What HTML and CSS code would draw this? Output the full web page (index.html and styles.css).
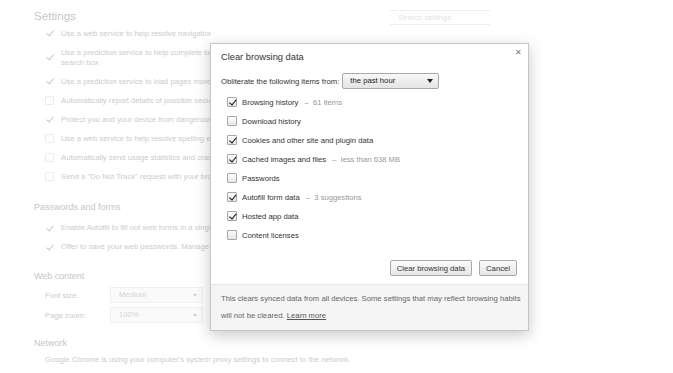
FILE: index.html
```html
<!DOCTYPE html>
<html lang="en">
<head>
    <meta charset="UTF-8">
    <meta name="viewport" content="width=device-width, initial-scale=1.0">
    <title>Settings - Clear browsing data</title>
    <link rel="stylesheet" href="styles.css">
</head>
<body>
    <div class="page">
        <div class="page-header">
            <h1>Settings</h1>
            <div class="search">Search settings</div>
        </div>

        <div class="rows">
            <div class="row"><span class="cb on"></span><span class="row-text">Use a web service to help resolve navigation errors</span></div>
            <div class="row"><span class="cb on"></span><span class="row-text">Use a prediction service to help complete searches and URLs typed in the address bar or the app launcher<br>search box</span></div>
            <div class="row"><span class="cb on"></span><span class="row-text">Use a prediction service to load pages more quickly</span></div>
            <div class="row"><span class="cb"></span><span class="row-text">Automatically report details of possible security incidents to Google</span></div>
            <div class="row"><span class="cb on"></span><span class="row-text">Protect you and your device from dangerous sites</span></div>
            <div class="row"><span class="cb"></span><span class="row-text">Use a web service to help resolve spelling errors</span></div>
            <div class="row"><span class="cb"></span><span class="row-text">Automatically send usage statistics and crash reports to Google</span></div>
            <div class="row"><span class="cb"></span><span class="row-text">Send a "Do Not Track" request with your browsing traffic</span></div>
        </div>

        <h2 class="section first">Passwords and forms</h2>
        <div class="rows">
            <div class="row"><span class="cb on"></span><span class="row-text">Enable Autofill to fill out web forms in a single click.</span></div>
            <div class="row"><span class="cb on"></span><span class="row-text">Offer to save your web passwords. Manage passwords</span></div>
        </div>

        <h2 class="section web">Web content</h2>
        <div class="field first-field"><span class="field-label">Font size:</span><span class="page-select">Medium<span class="page-arrow"></span></span></div>
        <div class="field"><span class="field-label">Page zoom:</span><span class="page-select">100%<span class="page-arrow"></span></span></div>

        <h2 class="section net">Network</h2>
        <p class="net-text">Google Chrome is using your computer's system proxy settings to connect to the network.</p>
    </div>

    <div class="dialog">
        <div class="dialog-title">Clear browsing data</div>
        <span class="close">&#x2715;</span>

        <div class="dialog-body">
            <div class="period">
                <span>Obliterate the following items from:</span>
                <span class="select">the past hour<span class="arrow"></span></span>
            </div>

            <div class="items">
                <div class="item"><span class="box checked"></span>Browsing history<span class="note">&ndash;&nbsp; 61 items</span></div>
                <div class="item"><span class="box"></span>Download history</div>
                <div class="item"><span class="box checked"></span>Cookies and other site and plugin data</div>
                <div class="item"><span class="box checked"></span>Cached images and files<span class="note">&ndash;&nbsp; less than 638 MB</span></div>
                <div class="item"><span class="box"></span>Passwords</div>
                <div class="item"><span class="box checked"></span>Autofill form data<span class="note">&ndash;&nbsp; 3 suggestions</span></div>
                <div class="item"><span class="box checked"></span>Hosted app data</div>
                <div class="item"><span class="box"></span>Content licenses</div>
            </div>

            <div class="actions">
                <button class="btn">Clear browsing data</button>
                <button class="btn">Cancel</button>
            </div>
        </div>

        <div class="dialog-footer">
            This clears synced data from all devices. Some settings that may reflect browsing habits<br>
            will not be cleared. <a href="#">Learn more</a>
        </div>
    </div>
</body>
</html>
```

FILE: styles.css
```css
body {
    margin: 0;
    font-family: 'Liberation Sans', Arial, sans-serif;
    font-size: 7.7px;
    background-color: #fff;
    color: #333;
    overflow: hidden;
}

/* faded settings page behind the dialog */

.page {
    width: 456px;
    padding-left: 34px;
    color: #cbcbcb;
}

.page-header {
    display: flex;
    justify-content: space-between;
    align-items: flex-start;
    height: 16px;
    padding-top: 8px;
}

.page-header h1 {
    margin: 0;
    font-size: 11.6px;
    font-weight: normal;
    line-height: 16px;
    color: #c6c6c6;
}

.search {
    margin-top: 2px;
    width: 100px;
    height: 15px;
    line-height: 13px;
    padding-left: 8px;
    border-top: 1px solid #eee;
    border-bottom: 1px solid #eee;
    box-sizing: border-box;
    color: #e4e4e4;
}

.rows {
    padding-left: 11px;
}

.row {
    display: flex;
    align-items: center;
    padding: 4.5px 0;
    line-height: 10px;
    white-space: nowrap;
}

/* the dialog covers the rest of each line */
.row-text {
    width: 150px;
    overflow: hidden;
}

.cb {
    flex: none;
    width: 7px;
    height: 7px;
    margin-right: 7px;
    border: 1px solid #ececec;
    border-radius: 1px;
    position: relative;
}

.cb.on {
    border-color: transparent;
}

.cb.on::after {
    content: '';
    position: absolute;
    left: 2px;
    top: -1px;
    width: 3px;
    height: 6px;
    border-right: 1.5px solid #c6c6c6;
    border-bottom: 1.5px solid #c6c6c6;
    transform: rotate(40deg);
}

.section {
    margin: 0;
    font-size: 9px;
    font-weight: normal;
    line-height: 12px;
    color: #c6c6c6;
}

.section.first {
    margin-top: 15px;
    margin-bottom: 5.5px;
}

.section.web {
    margin-top: 13.5px;
    margin-bottom: 3px;
}

.section.net {
    margin-top: 12px;
}

.field {
    display: flex;
    align-items: center;
    height: 20px;
    padding-left: 11px;
}

.field-label {
    width: 65px;
}

.page-select {
    position: relative;
    width: 93px;
    height: 16px;
    line-height: 14px;
    padding-left: 8px;
    box-sizing: border-box;
    border: 1px solid #f0f0f0;
    background: #fafafa;
    color: #d4d4d4;
}

.page-arrow {
    position: absolute;
    right: 5px;
    top: 6px;
    border-left: 2.5px solid transparent;
    border-right: 2.5px solid transparent;
    border-top: 3px solid #cfcfcf;
}

.net-text {
    margin: 6px 0 0;
    padding-left: 11px;
    line-height: 10px;
    white-space: nowrap;
}

/* dialog */

.dialog {
    position: absolute;
    left: 210px;
    top: 43px;
    width: 319px;
    height: 288px;
    box-sizing: border-box;
    display: flex;
    flex-direction: column;
    background: #fff;
    border: 1px solid #c6c6c6;
    box-shadow: 0 4px 14px rgba(0, 0, 0, 0.22);
}

.dialog-title {
    padding: 6px 0 0 10px;
    font-size: 9.3px;
    line-height: 14px;
    color: #333;
}

.close {
    position: absolute;
    right: 6px;
    top: 4px;
    font-size: 7.5px;
    color: #777;
}

.dialog-body {
    flex: 1;
    display: flex;
    flex-direction: column;
    padding: 0 11px 8px 10px;
}

.period {
    display: flex;
    align-items: center;
    margin-top: 9px;
    height: 16px;
}

.select {
    position: relative;
    margin-left: 3px;
    width: 97px;
    height: 16px;
    line-height: 14px;
    padding-left: 7px;
    box-sizing: border-box;
    border: 1px solid #a9a9a9;
    border-radius: 2px;
    background: linear-gradient(#f8f8f8, #e4e4e4);
    color: #222;
}

.arrow {
    position: absolute;
    right: 5px;
    top: 5px;
    border-left: 3px solid transparent;
    border-right: 3px solid transparent;
    border-top: 4px solid #222;
}

.items {
    margin-top: 3.5px;
    padding-left: 6px;
}

.item {
    display: flex;
    align-items: center;
    height: 19px;
}

.box {
    position: relative;
    width: 8px;
    height: 8px;
    margin-right: 5px;
    border: 1px solid #a8a8a8;
    border-radius: 1px;
    background: linear-gradient(#fdfdfd, #e6e6e6);
}

.box.checked::after {
    content: '';
    position: absolute;
    left: 2.5px;
    top: -0.5px;
    width: 2.5px;
    height: 5.5px;
    border-right: 1.6px solid #111;
    border-bottom: 1.6px solid #111;
    transform: rotate(40deg);
}

.note {
    margin-left: 6px;
    color: #999;
}

.actions {
    margin-top: auto;
    display: flex;
    justify-content: flex-end;
    gap: 7px;
}

.btn {
    height: 16px;
    padding: 0 6px;
    white-space: nowrap;
    font-family: inherit;
    font-size: 7.7px;
    color: #333;
    border: 1px solid #a9a9a9;
    border-radius: 2px;
    background: linear-gradient(#fbfbfb, #e6e6e6);
}

.dialog-footer {
    height: 46px;
    box-sizing: border-box;
    padding: 4.5px 4px 0 10px;
    line-height: 17px;
    white-space: nowrap;
    color: #666;
    background: #f5f5f5;
    border-top: 1px solid #e6e6e6;
}

.dialog-footer a {
    color: #555;
}
```
